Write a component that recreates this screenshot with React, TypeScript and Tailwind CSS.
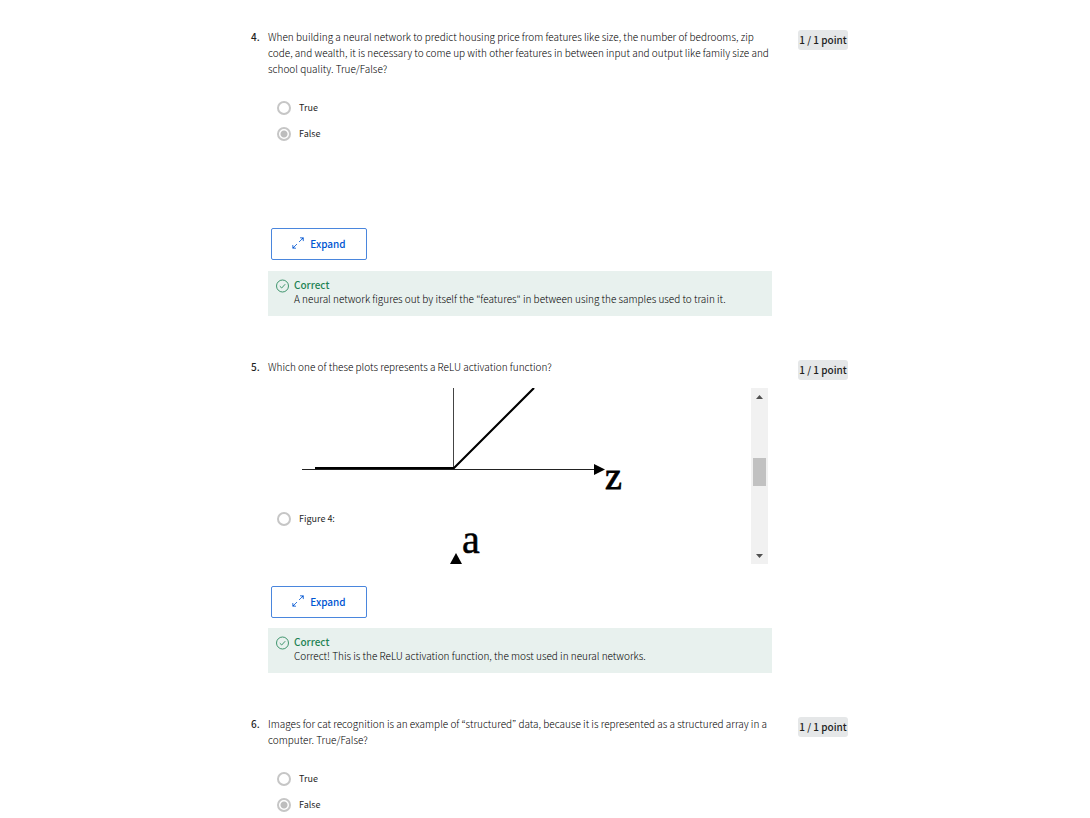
import type { ReactNode } from "react";

function Question({ number, title, children }: { number: number; title: string; children: ReactNode }) {
  return (
    <section className="grid grid-cols-[17px_minmax(0,1fr)_76px]">
      <span className="text-[10px] leading-[14px] font-medium">{number}.</span>
      <div>
        <h2 className="-mt-px pb-px text-[10px] leading-4 font-light text-black">{title}</h2>
        {children}
      </div>
      <div className="flex justify-end">
        <span className="flex h-5 w-[50px] items-center justify-center rounded-[3px] bg-[#e5e7e8] pb-[2px] text-[10px] font-medium whitespace-nowrap">
          1 / 1 point
        </span>
      </div>
    </section>
  );
}

function Option({ name, label, checked = false }: { name: string; label: string; checked?: boolean }) {
  return (
    <label className="flex h-[26px] items-center gap-2 pl-[9px] text-[9px] leading-4">
      <input
        type="radio"
        name={name}
        defaultChecked={checked}
        className="size-[14px] shrink-0 appearance-none rounded-full border-2 border-[#c6c6c6] bg-white checked:bg-[radial-gradient(circle,#bdbdbd_3px,transparent_4px)]"
      />
      {label}
    </label>
  );
}

function TrueFalse({ name }: { name: string }) {
  return (
    <div className="mt-[17px]">
      <Option name={name} label="True" />
      <Option name={name} label="False" checked />
    </div>
  );
}

function ExpandButton() {
  return (
    <button
      type="button"
      className="ml-[3px] flex h-8 w-24 items-center justify-center gap-[6px] rounded-xs border border-[#4a86dd] pb-[2px] text-[10px] font-medium text-[#0056d2]"
    >
      <svg width="12" height="12" viewBox="0 0 12 12" fill="none" stroke="currentColor" strokeWidth="0.8" aria-hidden="true">
        <path d="M8 0.8h3.3v3.3M11.3 0.8L7 5M5 7L0.8 11.2M0.8 8v3.2H4" />
        <path d="M9.4 1h1.7v1.7zM1 9.4v1.7h1.7z" fill="currentColor" stroke="none" />
      </svg>
      Expand
    </button>
  );
}

function Feedback({ children }: { children: ReactNode }) {
  return (
    <div className="flex gap-[5px] bg-[#e8f1ee] px-2 pt-[7px] pb-[10px] text-[10px] leading-[14px]">
      <svg className="mt-px shrink-0" width="13" height="14" viewBox="0 0 13 14" fill="none" stroke="#2d8a5f" strokeWidth="0.9" aria-hidden="true">
        <circle cx="6.5" cy="7" r="6" />
        <path d="M3.8 7.2L5.7 9L9.2 5.2" />
      </svg>
      <div>
        <p className="font-medium text-[#1f8354]">Correct</p>
        <p className="font-light text-black">{children}</p>
      </div>
    </div>
  );
}

function Plots() {
  return (
    <div className="mt-3 mr-1 flex h-44">
      <div className="min-w-0 flex-1 overflow-hidden">
        <svg className="block" width="400" height="118" viewBox="0 0 400 118" role="img" aria-label="Activation plot">
          <path d="M185.5 0V81" stroke="#444" strokeWidth="1" />
          <path d="M34 81.5H327" stroke="#222" strokeWidth="1.2" />
          <path d="M47 80H186L266 0" stroke="#000" strokeWidth="2.2" fill="none" />
          <path d="M326 76L337 81.5L326 87z" />
          <text x="337" y="101" fontSize="38" stroke="#000" strokeWidth="0.8" className="font-['Liberation_Serif',serif]">z</text>
        </svg>
        <Option name="relu" label="Figure 4:" />
        <svg className="block overflow-visible" width="400" height="32" viewBox="0 0 400 32" role="img" aria-label="Vertical axis">
          <path d="M182 32L188 21L194 32z" />
          <text x="194" y="21" fontSize="40" stroke="#000" strokeWidth="0.5" className="font-['Liberation_Serif',serif]">a</text>
        </svg>
      </div>
      <div className="flex w-[17px] flex-col items-center bg-[#f1f1f1]">
        <button type="button" aria-label="Scroll up" className="flex h-[17px] w-full items-center justify-center">
          <svg width="7" height="4" viewBox="0 0 7 4" fill="#505050"><path d="M0 4L3.5 0L7 4z" /></svg>
        </button>
        <div className="flex-1 pt-[53px]">
          <div className="h-7 w-[13px] bg-[#c1c1c1]" />
        </div>
        <button type="button" aria-label="Scroll down" className="flex h-[17px] w-full items-center justify-center">
          <svg width="7" height="4" viewBox="0 0 7 4" fill="#505050"><path d="M0 0L3.5 4L7 0z" /></svg>
        </button>
      </div>
    </div>
  );
}

export default function App() {
  return (
    <div className="min-h-screen bg-white font-['Noto_Sans_CJK_KR',sans-serif] text-[#1f1f1f]">
      <main className="mx-auto flex max-w-[606px] flex-col gap-11 pt-[30px] pl-[9px]">
        <Question
          number={4}
          title="When building a neural network to predict housing price from features like size, the number of bedrooms, zip code, and wealth, it is necessary to come up with other features in between input and output like family size and school quality. True/False?"
        >
          <TrueFalse name="features" />
          <div className="mt-[81px] mb-[11px]">
            <ExpandButton />
          </div>
          <Feedback>A neural network figures out by itself the "features" in between using the samples used to train it.</Feedback>
        </Question>
        <Question number={5} title="Which one of these plots represents a ReLU activation function?">
          <Plots />
          <div className="mt-[22px] mb-[10px]">
            <ExpandButton />
          </div>
          <Feedback>Correct! This is the ReLU activation function, the most used in neural networks.</Feedback>
        </Question>
        <Question
          number={6}
          title="Images for cat recognition is an example of “structured” data, because it is represented as a structured array in a computer. True/False?"
        >
          <TrueFalse name="structured" />
        </Question>
      </main>
    </div>
  );
}
